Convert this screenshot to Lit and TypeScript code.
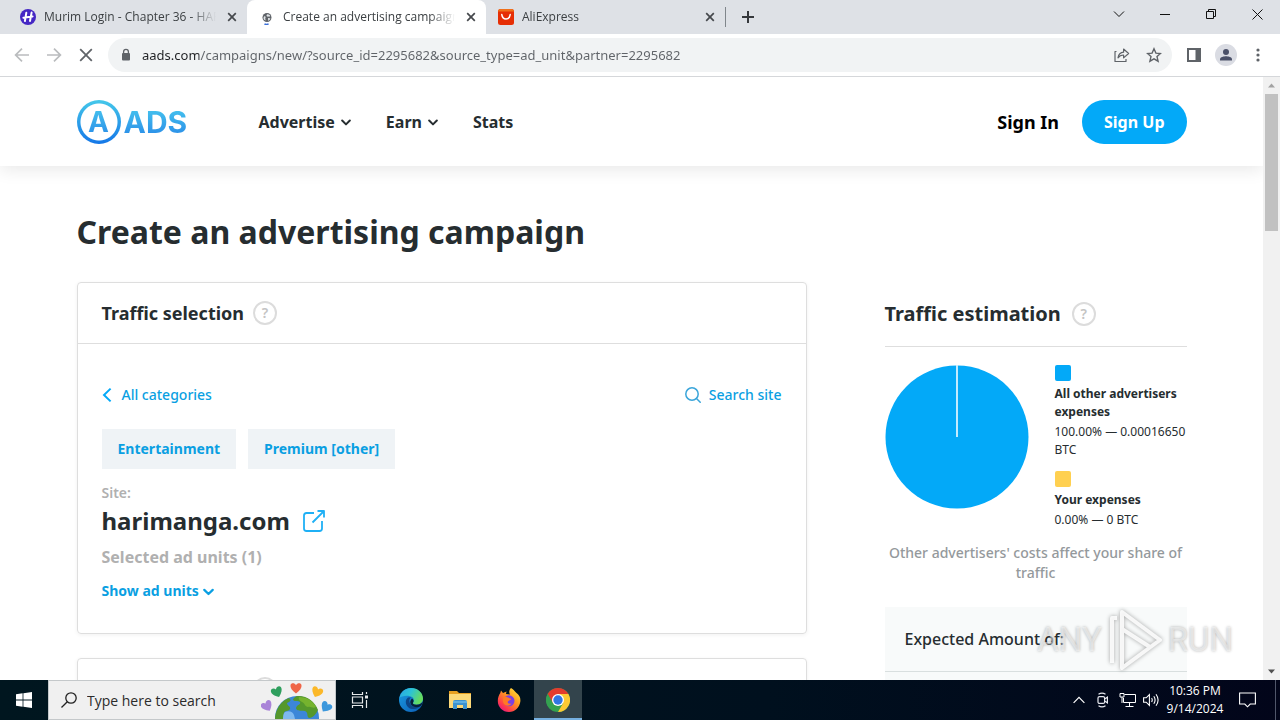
import { LitElement, html, css, svg } from "lit";
import { customElement } from "lit/decorators.js";
import { classMap } from "lit/directives/class-map.js";

const reset = css`
  *,
  *::before,
  *::after {
    box-sizing: border-box;
  }
  button,
  input {
    font: inherit;
    color: inherit;
    border: 0;
    padding: 0;
    margin: 0;
    background: none;
    outline: 0;
  }
  a {
    color: inherit;
    text-decoration: none;
  }
  h1,
  h2,
  p,
  dl,
  dd {
    margin: 0;
    padding: 0;
  }
  svg {
    display: block;
    flex: none;
  }
`;

const chevron = (size: number) => svg`
  <svg width=${size} height=${size} viewBox="0 0 12 12" fill="none" stroke="currentColor" stroke-width="2.400" stroke-linecap="round" stroke-linejoin="round"><path d="M1.400 4.200 6 8.800 10.600 4.200"/></svg>`;

const faviconH = html`<svg width="16" height="16" viewBox="0 0 16 16">
  <circle cx="8" cy="8" r="8" fill="#4527c4" />
  <path d="M6.3 3.8 4.9 12M11.6 3.6 10 12M3.4 8.7C6 8.5 9 7.6 12.6 7.4" stroke="#fff" stroke-width="2" stroke-linecap="round" fill="none" />
</svg>`;
const faviconLoading = html`<svg width="16" height="16" viewBox="0 0 16 16">
  <circle cx="8" cy="8.500" r="4.500" fill="#5f6368" />
  <path d="M5 7.400c1.600-.4 2 .8 1.400 1.600-.6.8.6 1.400 0 2.600C4.600 10.600 4 9 5 7.400zM8 5.400c1.400-.4 2.800.4 3.200 1.600-.8 1.200-2 .2-2.600.8C7.400 7 7.200 6 8 5.400zM9 9.200c1-.4 2 0 2.400.4-.4 1.200-1.200 2-2.200 2.200z" fill="#dfe3e6" />
  <path d="M5.500 15C6.500 15.500 8.500 15.500 9.600 14.900" stroke="#3b6fd8" stroke-width="1.400" fill="none" />
</svg>`;
const faviconAli = html`<svg width="16" height="16" viewBox="0 0 16 16">
  <rect width="16" height="16" rx="2.500" fill="#e62e04" />
  <path d="M0 2.500A2.500 2.500 0 0 1 2.500 0h11A2.500 2.500 0 0 1 16 2.500z" fill="#f0701a" />
  <path d="M3.800 5.600C4.600 11.400 11.400 11.400 12.200 5.600" stroke="#fff" stroke-width="1.500" stroke-linecap="round" fill="none" />
</svg>`;

const tabs = [
  { title: "Murim Login - Chapter 36 - HAR", icon: faviconH, active: false },
  { title: "Create an advertising campaign", icon: faviconLoading, active: true },
  { title: "AliExpress", icon: faviconAli, active: false },
];

@customElement("browser-chrome")
export class BrowserChrome extends LitElement {
  static styles = [
    reset,
    css`
      :host {
        display: block;
        flex: none;
        font-family: "Open Sans", "Noto Sans", sans-serif;
        font-size: 12px;
        color: #3c4043;
      }
      .strip {
        display: flex;
        height: 34px;
        padding-left: 8px;
        background: #dee1e6;
      }
      .tab {
        display: flex;
        align-items: center;
        flex: 0 1 239px;
        min-width: 0;
        padding: 0 7px 0 12px;
        gap: 8px;
      }
      .tab.active {
        background: #fff;
        border-radius: 8px 8px 0 0;
      }
      .title {
        flex: 1;
        min-width: 0;
        overflow: hidden;
        white-space: nowrap;
        line-height: 16px;
        mask-image: linear-gradient(to right, #000 85%, transparent);
      }
      .close,
      .icon {
        display: grid;
        place-items: center;
      }
      .close {
        width: 16px;
        height: 16px;
      }
      .add {
        display: grid;
        place-items: center;
        width: 46px;
        position: relative;
      }
      .add::before {
        content: "";
        position: absolute;
        left: 0;
        top: 7px;
        height: 20px;
        width: 1px;
        background: #80868b;
      }
      .window {
        display: flex;
        margin-left: auto;
        color: #111;
      }
      .window button {
        display: grid;
        place-items: center;
        width: 46px;
        height: 28px;
      }
      .toolbar {
        display: flex;
        align-items: center;
        height: 43px;
        padding: 0 6px;
        background: #fff;
        border-bottom: 1px solid #d5d7da;
      }
      .icon {
        width: 32px;
        height: 32px;
        color: #5f6368;
      }
      .dim {
        color: #babcbe;
      }
      .omnibox {
        display: flex;
        align-items: center;
        flex: 1;
        min-width: 0;
        height: 34px;
        margin: 0 6px;
        padding: 0 2px 0 12px;
        gap: 10px;
        border-radius: 17px;
        background: #f1f3f4;
      }
      .url {
        flex: 1;
        min-width: 0;
        height: 24px;
        font-family: "Noto Sans", sans-serif;
        font-size: 13px;
        color: #5f6368;
        background: linear-gradient(to right, #202124 57px, #5f6368 57px);
        background-clip: text;
        -webkit-background-clip: text;
        -webkit-text-fill-color: transparent;
      }
      .actions {
        display: flex;
      }
    `,
  ];

  render() {
    return html`
      <div class="strip">
        ${tabs.map(
          (t) => html`<div class=${classMap({ tab: true, active: t.active })}>
            ${t.icon}<span class="title">${t.title}</span>
            <button class="close" aria-label="Close tab">
              <svg width="10" height="10" viewBox="0 0 10 10" stroke="#45484c" stroke-width="1.700"><path d="M1.200 1.200l7.600 7.600M8.800 1.200 1.200 8.800" /></svg>
            </button>
          </div>`
        )}
        <button class="add" aria-label="New tab">
          <svg width="14" height="14" viewBox="0 0 14 14" stroke="#35383c" stroke-width="2"><path d="M7 1v12M1 7h12" /></svg>
        </button>
        <div class="window">
          <button aria-label="Search tabs"><svg width="12" height="12" viewBox="0 0 12 12" fill="none" stroke="currentColor"><path d="M1 3.500 6 8.500 11 3.500" /></svg></button>
          <button aria-label="Minimize"><svg width="10" height="11" viewBox="0 0 10 11" stroke="currentColor"><path d="M0 5.500h10" /></svg></button>
          <button aria-label="Restore"><svg width="10" height="10" viewBox="0 0 10 10" fill="none" stroke="currentColor"><path d="M.5 2.500h7v7h-7zM2.500 2.500v-2h7v7h-2" /></svg></button>
          <button aria-label="Close"><svg width="11" height="11" viewBox="0 0 11 11" stroke="currentColor"><path d="M.5.5l10 10M10.500.5l-10 10" /></svg></button>
        </div>
      </div>
      <div class="toolbar">
        <button class="icon dim" aria-label="Back"><svg width="16" height="16" viewBox="0 0 16 16" fill="none" stroke="currentColor" stroke-width="1.700"><path d="M15 8H2M8 1.600 1.600 8 8 14.400" /></svg></button>
        <button class="icon dim" aria-label="Forward"><svg width="16" height="16" viewBox="0 0 16 16" fill="none" stroke="currentColor" stroke-width="1.700"><path d="M1 8h13M8 1.600 14.400 8 8 14.400" /></svg></button>
        <button class="icon" aria-label="Stop"><svg width="14" height="14" viewBox="0 0 14 14" stroke="currentColor" stroke-width="1.800"><path d="M1.200 1.200l11.600 11.600M12.800 1.200 1.200 12.800" /></svg></button>
        <div class="omnibox">
          <svg width="12" height="14" viewBox="0 0 12 14"><rect x="2" y="5" width="8" height="7.500" rx="1" fill="#5f6368" /><path d="M3.600 5.500V3.800a2.400 2.400 0 0 1 4.800 0v1.700" fill="none" stroke="#5f6368" stroke-width="1.300" /></svg>
          <input class="url" aria-label="Address" .value=${"aads.com/campaigns/new/?source_id=2295682&source_type=ad_unit&partner=2295682"} />
          <div class="actions">
            <button class="icon" aria-label="Share"><svg width="16" height="16" viewBox="0 0 16 16" fill="none" stroke="currentColor" stroke-width="1.200" stroke-linejoin="round"><path d="M2.500 4.500H1v10h11v-2.500M4 10.800C4.600 7.200 6.600 5.400 9.600 5.200V2l5 4.500-5 4.400V8C7 8 5.400 8.800 4 10.800z" /></svg></button>
            <button class="icon" aria-label="Bookmark"><svg width="16" height="16" viewBox="0 0 16 16" fill="none" stroke="currentColor" stroke-width="1.400"><path d="M8 1.800l1.900 4.300 4.600.4-3.500 3.100 1.100 4.600L8 11.800l-4.100 2.400L5 9.600 1.500 6.500l4.600-.4z" /></svg></button>
          </div>
        </div>
        <button class="icon" aria-label="Side panel"><svg width="14" height="14" viewBox="0 0 14 14"><path d="M0 0h14v14H0zM2 2v10h6.500V2z" fill="currentColor" fill-rule="evenodd" /></svg></button>
        <button class="icon" aria-label="Profile"><svg width="22" height="22" viewBox="0 0 22 22"><circle cx="11" cy="11" r="11" fill="#dadce3" /><circle cx="11" cy="8" r="3" fill="#4a5068" /><path d="M5 16.500v-1.300C5 13 9 12.200 11 12.200s6 .8 6 3v1.300z" fill="#4a5068" /></svg></button>
        <button class="icon" aria-label="Menu"><svg width="4" height="14" viewBox="0 0 4 14" fill="currentColor"><circle cx="2" cy="2" r="1.600" /><circle cx="2" cy="7" r="1.600" /><circle cx="2" cy="12" r="1.600" /></svg></button>
      </div>
    `;
  }
}

@customElement("help-tip")
export class HelpTip extends LitElement {
  static styles = [
    reset,
    css`
      :host {
        display: block;
      }
      .help {
        display: grid;
        place-items: center;
        width: 24px;
        height: 24px;
        border: 2px solid #dcdcdc;
        border-radius: 50%;
        color: #c4c4c4;
        font: 600 14px/20px "Noto Sans", sans-serif;
      }
    `,
  ];
  render() {
    return html`<button class="help" aria-label="Help">?</button>`;
  }
}

const legend = [
  { name: "All other advertisers expenses", value: "100.00% — 0.00016650 BTC", tone: "blue" },
  { name: "Your expenses", value: "0.00% — 0 BTC", tone: "yellow" },
];

@customElement("campaign-page")
export class CampaignPage extends LitElement {
  static styles = [
    reset,
    css`
      :host {
        display: flex;
        flex: 1;
        min-height: 0;
        overflow: hidden;
        background: #fff;
        font-family: "Noto Sans", sans-serif;
        font-size: 14px;
        line-height: 20px;
        color: #262d30;
      }
      .content {
        flex: 1;
        min-width: 0;
        overflow: hidden;
      }
      .container {
        width: 100%;
        max-width: 1140px;
        margin: 0 auto;
        padding: 0 15px;
      }
      .header {
        box-shadow: 0 4px 16px rgba(0, 0, 0, 0.09);
      }
      .bar {
        display: flex;
        align-items: center;
        height: 89px;
        font-size: 16px;
        font-weight: 700;
        line-height: 24px;
      }
      .logo {
        display: flex;
        align-items: center;
        gap: 3px;
        width: 182px;
        font: 700 30px/44px "Inter", sans-serif;
      }
      .mark {
        display: grid;
        place-items: center;
        width: 44px;
        height: 44px;
        border-radius: 50%;
        font-size: 28px;
        background: radial-gradient(circle, #fff 18px, transparent 19px), linear-gradient(#45c8ea, #1477e8);
      }
      .word {
        background: linear-gradient(#45c2ee 20%, #2b8fe8 80%);
        background-clip: text;
        -webkit-background-clip: text;
        color: transparent;
      }
      .nav {
        display: flex;
        gap: 35px;
      }
      .nav a {
        display: flex;
        align-items: center;
        gap: 6px;
      }
      .account {
        display: flex;
        align-items: center;
        gap: 23px;
        margin-left: auto;
      }
      .signin {
        color: #000;
        font-size: 18px;
      }
      .signup {
        height: 44px;
        padding: 0 22px;
        border-radius: 22px;
        color: #fff;
        background: #03a9f8;
      }
      .heading {
        margin: 42px 0 26px;
        font-size: 32px;
        line-height: 48px;
        font-weight: 700;
      }
      .columns {
        display: grid;
        grid-template-columns: minmax(0, 730fr) minmax(0, 302fr);
        column-gap: 78px;
      }
      .cards {
        display: grid;
        gap: 24px;
        align-content: start;
      }
      .card {
        border: 1px solid #dedede;
        border-radius: 4px;
        box-shadow: 0 1px 4px rgba(0, 0, 0, 0.06);
      }
      .cardhead {
        display: flex;
        align-items: center;
        gap: 9px;
        height: 61px;
        padding: 0 24px;
        border-bottom: 1px solid #dedede;
      }
      .cardhead h2 {
        min-width: 142px;
        font-size: 18px;
        line-height: 24px;
        font-weight: 700;
      }
      .cardbody {
        padding: 40px 24px 32px;
      }
      .link {
        display: flex;
        align-items: center;
        gap: 8px;
        color: #0a9fe2;
        font-weight: 500;
      }
      .between {
        display: flex;
        justify-content: space-between;
        height: 22px;
      }
      .strong {
        gap: 4px;
        font-weight: 700;
      }
      .tags {
        display: flex;
        gap: 12px;
        margin: 23px 0 14px;
      }
      .tags a {
        padding: 10px 16px;
        background: #eff3f6;
        color: #0a9fe2;
        font-weight: 700;
      }
      .muted {
        color: #b0b0b0;
        font-weight: 700;
      }
      .light {
        font-weight: 600;
      }
      .site {
        display: flex;
        align-items: center;
        gap: 12px;
        margin: 2px 0 8px;
        font-size: 24px;
        line-height: 32px;
        font-weight: 700;
        color: #262d30;
      }
      .units {
        margin-bottom: 12px;
        font-size: 16px;
        line-height: 24px;
      }
      .aside {
        display: flex;
        flex-direction: column;
      }
      .estimate {
        display: flex;
        align-items: center;
        gap: 11px;
        height: 65px;
        border-bottom: 1px solid #dedede;
        white-space: nowrap;
      }
      .estimate h2 {
        font-size: 20px;
        font-weight: 700;
      }
      .chart {
        display: flex;
        gap: 26px;
        padding: 18px 0 14px;
        font-size: 12px;
        line-height: 18px;
      }
      .legend {
        display: grid;
        gap: 12px;
        flex: 1;
        margin-right: -2px;
      }
      .legend dt {
        font-weight: 700;
      }
      .legend dt::before {
        content: "";
        display: block;
        width: 16px;
        height: 16px;
        margin-bottom: 4px;
        border-radius: 2px;
        background: #03a9f8;
      }
      .legend .yellow::before {
        background: #ffd050;
      }
      .legend dd {
        margin-top: 2px;
      }
      .note {
        text-align: center;
        color: #94999c;
        font-weight: 500;
      }
      .expected {
        margin-top: 24px;
        background: #f8fafa;
        font-size: 16px;
        line-height: 24px;
        font-weight: 500;
      }
      .expected p {
        height: 65px;
        padding: 20px;
        border-bottom: 1px solid #d9dfdf;
      }
      .rest {
        height: 60px;
      }
      .scroll {
        display: flex;
        flex-direction: column;
        align-items: center;
        flex: none;
        width: 17px;
        background: #f1f1f1;
      }
      .scroll svg {
        margin: 6px 0;
      }
      .track {
        flex: 1;
        width: 13px;
      }
      .thumb {
        height: 24%;
        background: #c1c1c1;
      }
    `,
  ];

  render() {
    return html`
      <div class="content">
        <header class="header">
          <div class="container bar">
            <a class="logo" href="#"><span class="mark"><span class="word">A</span></span><span class="word">ADS</span></a>
            <nav class="nav">
              <a href="#">Advertise ${chevron(10)}</a>
              <a href="#">Earn ${chevron(10)}</a>
              <a href="#">Stats</a>
            </nav>
            <div class="account">
              <a class="signin" href="#">Sign In</a>
              <button class="signup">Sign Up</button>
            </div>
          </div>
        </header>
        <main class="container">
          <h1 class="heading">Create an advertising campaign</h1>
          <div class="columns">
            <div class="cards">
              <section class="card">
                <div class="cardhead"><h2>Traffic selection</h2><help-tip></help-tip></div>
                <div class="cardbody">
                  <div class="between">
                    <a class="link" href="#">
                      <svg width="12" height="16" viewBox="0 0 12 16" fill="none" stroke="#03a9f8" stroke-width="2"><path d="M8.600 1.600 2 8l6.600 6.400" /></svg>All categories
                    </a>
                    <a class="link" href="#">
                      <svg width="16" height="16" viewBox="0 0 16 16" fill="none" stroke="#3aa5da" stroke-width="1.500"><circle cx="7" cy="7" r="6.200" /><path d="M11.500 11.500l4.200 4.200" /></svg>Search site
                    </a>
                  </div>
                  <div class="tags"><a href="#">Entertainment</a><a href="#">Premium [other]</a></div>
                  <p class="muted light">Site:</p>
                  <p class="site">harimanga.com
                    <a href="#" aria-label="Open site"><svg width="24" height="24" viewBox="0 0 24 24" fill="none" stroke="#1fb0f5" stroke-width="1.800" stroke-linejoin="round"><path d="M12 4H4.500Q2 4 2 6.500v13Q2 22 4.500 22h13q2.500 0 2.500-2.500V12M15.500 2H22v6.500M22 2 10.500 13.500" /></svg></a>
                  </p>
                  <p class="muted units">Selected ad units (1)</p>
                  <a class="link strong" href="#">Show ad units ${chevron(11)}</a>
                </div>
              </section>
              <section class="card">
                <div class="cardhead"><h2></h2><help-tip></help-tip></div>
              </section>
            </div>
            <aside class="aside">
              <div class="estimate"><h2>Traffic estimation</h2><help-tip></help-tip></div>
              <div class="chart">
                <svg width="144" height="144" viewBox="0 0 144 144"><circle cx="72" cy="72" r="71.500" fill="#03a9f8" /><path d="M72 0v72" stroke="#d9f2fe" stroke-width="1.800" /></svg>
                <dl class="legend">
                  ${legend.map((l) => html`<div><dt class=${l.tone}>${l.name}</dt><dd>${l.value}</dd></div>`)}
                </dl>
              </div>
              <p class="note">Other advertisers' costs affect your share of traffic</p>
              <div class="expected"><p>Expected Amount of:</p><div class="rest"></div></div>
            </aside>
          </div>
        </main>
      </div>
      <div class="scroll">
        <svg width="7" height="5" viewBox="0 0 7 5"><path d="M0 4.500h7L3.500.5z" fill="#a3a3a3" /></svg>
        <div class="track"><div class="thumb"></div></div>
        <svg width="7" height="5" viewBox="0 0 7 5"><path d="M0 .5h7L3.500 4.500z" fill="#505050" /></svg>
      </div>
    `;
  }
}

const heart = (x: number, y: number, r: number, color: string) => svg`
  <path transform="translate(${x} ${y}) rotate(${r})" fill=${color} d="M0 5.500C-4 2.500-6-.5-5.500-2.800-5-5.200-1.500-5.500 0-2.800 1.500-5.500 5-5.200 5.500-2.800 6-.5 4 2.500 0 5.500z"/>`;

const apps = [
  {
    name: "Task View",
    active: false,
    icon: html`<svg width="22" height="16" viewBox="0 0 22 16" fill="none" stroke="#e4e8ea" stroke-width="1.200"><path d="M1.500 0v2.500h10V0M1.500 16v-2.500h10V16M1.500 5h10v6h-10zM15.500 0v2M15.500 8v8" /><path d="M14 5h3" stroke-width="3" /></svg>`,
  },
  {
    name: "Edge",
    active: false,
    icon: html`<svg width="24" height="24" viewBox="0 0 24 24">
      <defs><linearGradient id="edgeTop" x1="0" y1="0" x2="1" y2=".4"><stop stop-color="#2aa4e6" /><stop offset=".5" stop-color="#2cc3d6" /><stop offset="1" stop-color="#66dc5e" /></linearGradient>
      <linearGradient id="edgeLow" x1="0" y1="0" x2="1" y2="1"><stop stop-color="#1b9de2" /><stop offset="1" stop-color="#0b5cb5" /></linearGradient></defs>
      <circle cx="12" cy="12" r="12" fill="url(#edgeLow)" />
      <path d="M.4 10C2 3.500 6.500 0 12 0c7 0 12 5 12 10.500 0 4-3 6.200-6.500 6.200-3 0-4.200-1.200-3.400-2.200 1.600-2 .8-5.500-3-6.300C6.500 7.200 1.500 8.500.4 10z" fill="url(#edgeTop)" />
      <path d="M9 9.500c-3 2-3 7 .5 10 2.500 2 7 2.500 11.800-.8-3 1.200-8 .5-10-2.700C9.800 13.500 10 11 12 9.300z" fill="#0d4586" />
      <path d="M14.100 14.500c-.8 1 .4 2.200 3.400 2.200 3.500 0 5.300-1.200 6.200-3.200 0 2-1 3.900-2.600 5-3 1.300-7.500.7-9.400-2.300-.9-2-.4-4 1.300-5.600 1.700 1.200 2.100 2.700 1.100 3.900z" fill="#07203a" /></svg>`,
  },
  {
    name: "File Explorer",
    active: false,
    icon: html`<svg width="22" height="20" viewBox="0 0 22 20"><path d="M0 1h8l2 2h12v4H0z" fill="#e8a020" /><path d="M0 4h22v14H0z" fill="#fdd978" /><path d="M4 19v-7q0-2 2-2h10q2 0 2 2v7h-4v-4H8v4z" fill="#3d93cf" /><path d="M4 12h14" stroke="#6ab8e8" stroke-width="1.500" /></svg>`,
  },
  {
    name: "Firefox",
    active: false,
    icon: html`<svg width="24" height="24" viewBox="0 0 24 24">
      <defs><linearGradient id="fox" x1="1" y1="0" x2=".2" y2="1"><stop stop-color="#fff044" /><stop offset=".45" stop-color="#ff9a1f" /><stop offset=".8" stop-color="#ff3d4a" /><stop offset="1" stop-color="#e31587" /></linearGradient></defs>
      <path d="M14 0c3 1.500 3.500 3.500 5.500 5 3 2.200 4.300 5 3.800 8.800C22.500 19.500 18 24 12 24 5.500 24 .8 19 .8 13 .8 9.500 2 7 3.300 5L4 2.500 6 5l3.500-1.500L9 6l4 .5C11.500 4 12.500 1.500 14 0z" fill="url(#fox)" />
      <circle cx="12" cy="12.800" r="5.500" fill="#7b3fe4" /><path d="M6 9.500c2-1.500 4.500-.5 6 .5l2.500 1c-1 1.500-3 1.200-3.500 2.500-1 1 .8 3 3.500 2 -2 3.500-7.500 2.500-8.500-1.500z" fill="#ff7a25" /></svg>`,
  },
  {
    name: "Chrome",
    active: true,
    icon: html`<svg width="24" height="24" viewBox="0 0 24 24"><circle cx="12" cy="12" r="12" fill="#34a150" /><path d="M12 12 1.600 6A12 12 0 0 1 22.400 6z" fill="#e33b2e" /><path d="M12 6h10.400A12 12 0 0 1 12 24l5.200-9z" fill="#fcc934" /><path d="M1.600 6 6.800 15 12 12V6z" fill="#e33b2e" /><path d="M1.600 6 6.800 15l3 1-2 7A12 12 0 0 1 1.600 6z" fill="#34a150" /><circle cx="12" cy="12" r="6" fill="#fff" /><circle cx="12" cy="12" r="4.700" fill="#2f76e4" /></svg>`,
  },
];

@customElement("task-bar")
export class TaskBar extends LitElement {
  static styles = [
    reset,
    css`
      :host {
        display: flex;
        flex: none;
        height: 40px;
        background: linear-gradient(to right, #00161f, #00101e 60%, #02051a);
        font-family: "Open Sans", "Noto Sans", sans-serif;
        color: #fff;
      }
      .cell {
        display: grid;
        place-items: center;
        width: 48px;
        height: 40px;
      }
      .apps {
        display: flex;
        gap: 1px;
        margin-left: 2px;
      }
      .app {
        border-bottom: 2px solid transparent;
        padding-top: 2px;
      }
      .app.active {
        background: #33444c;
        border-bottom-color: #76b0e0;
      }
      .search {
        display: flex;
        align-items: center;
        flex: 0 1 288px;
        min-width: 0;
        gap: 10px;
        padding-left: 12px;
        background: #f0f0f0;
        border: 1px solid #c4c8ca;
        color: #222;
      }
      .field {
        flex: 1;
        min-width: 0;
        height: 30px;
        font-size: 14px;
      }
      .field::placeholder {
        color: #2b2b2b;
        opacity: 1;
      }
      .tray {
        display: flex;
        align-items: center;
        margin-left: auto;
      }
      .mini {
        display: grid;
        place-items: center;
        width: 24px;
        height: 40px;
      }
      .clock {
        width: 64px;
        margin-right: 6px;
        font-size: 12px;
        line-height: 18px;
        text-align: center;
        white-space: nowrap;
      }
      .notes {
        width: 28px;
      }
      .peek {
        width: 5px;
        height: 40px;
        margin-left: 14px;
        border-left: 1px solid #50566a;
      }
    `,
  ];

  render() {
    return html`
      <button class="cell" aria-label="Start"><svg width="16" height="16" viewBox="0 0 16 16" fill="#fff"><path d="M0 2.200 6.600 1.300v6.300H0zM7.400 1.200 16 0v7.600H7.400zM0 8.400h6.600v6.300L0 13.800zM7.400 8.400H16V16l-8.600-1.200z" /></svg></button>
      <label class="search">
        <svg width="16" height="16" viewBox="0 0 16 16" fill="none" stroke="#222" stroke-width="1.300"><circle cx="10" cy="6" r="5.200" /><path d="M6.300 9.700.5 15.500" /></svg>
        <input class="field" aria-label="Search" placeholder="Type here to search" />
        <svg width="74" height="38" viewBox="0 0 74 38">
          <circle cx="36" cy="37" r="22" fill="#3c86d8" />
          <path d="M36 15c9-1 18 5 21 14-2 4-5 8-9 8-3-2 0-5-4-7-4-1-8 1-9-3 1-4 5-3 4-6-2-2-5 0-7-2 0-2 2-3 4-4zM16 29c3-7 7-10 12-12 3 2 1 4-2 5 0 3 4 3 3 6-2 3-5 1-6 4-1 2 2 3 1 5l0 1H14c0-3 1-7 2-9z" fill="#55982c" />
          <path d="M38 16c8 0 14 4 17 10-3 2-5-1-8 0-3 0-3-4-6-5-2-1-4-3-3-5z" fill="#76b32e" />
          <path d="M24 31c4-2 8 0 9 3l1 4H22c0-3 0-5 2-7z" fill="#7fb9f0" />
          ${heart(35, 7, 0, "#ef6548")}${heart(16, 11, -22, "#2f9f5e")}${heart(56, 11, 22, "#fbb829")}${heart(6, 25, -30, "#a983d8")}${heart(65, 26, 35, "#3b97dc")}
        </svg>
      </label>
      <div class="apps">
        ${apps.map((a) => html`<button class=${classMap({ cell: true, app: true, active: a.active })} aria-label=${a.name}>${a.icon}</button>`)}
      </div>
      <div class="tray">
        <button class="mini" aria-label="Hidden icons"><svg width="12" height="8" viewBox="0 0 12 8" fill="none" stroke="#fff" stroke-width="1.200"><path d="M.6 6.800 6 1.400l5.400 5.400" /></svg></button>
        <button class="mini" aria-label="Meet now"><svg width="14" height="16" viewBox="0 0 14 16" fill="none" stroke="#e6e8ee" stroke-width="1.200"><rect x="2" y="4.600" width="6.600" height="6.800" rx="1.500" /><path d="M8.600 7 11.400 5.200v5.600L8.600 9M2.500 2.200Q6 0 9.500 2.200M2.500 13.800q3.500 2.200 7 0" /></svg></button>
        <button class="mini" aria-label="Network"><svg width="17" height="14" viewBox="0 0 17 14" fill="none" stroke="#fff"><path d="M5.500 1.500h11v8H4.500V5M10.500 9.500v4M6.500 13.500h8M1 .5h4v3.500H1zM3 4v6" /></svg></button>
        <button class="mini" aria-label="Volume"><svg width="17" height="14" viewBox="0 0 17 14" fill="none" stroke="#fff" stroke-width="1.100"><path d="M.6 4.800h2.600L6.400 1.600v10.800L3.200 9.200H.6zM8.600 5q1.300 2 0 4M10.800 3.200q2.600 3.800 0 7.600M13 1.200q4.200 5.800 0 11.600" /></svg></button>
        <div class="clock"><div>10:36 PM</div><div>9/14/2024</div></div>
        <button class="mini notes" aria-label="Notifications"><svg width="17" height="16" viewBox="0 0 17 16" fill="none" stroke="#fff" stroke-width="1.100"><path d="M.6 1h15.800v11h-5.200l-2.700 2.800L5.800 12H.6z" /></svg></button>
        <div class="peek"></div>
      </div>
    `;
  }
}

@customElement("app-root")
export class AppRoot extends LitElement {
  static styles = [
    reset,
    css`
      :host {
        position: relative;
        display: flex;
        flex-direction: column;
        height: 100vh;
        overflow: hidden;
      }
      .watermark {
        position: absolute;
        right: 47px;
        bottom: 48px;
        display: flex;
        align-items: center;
        gap: 6px;
        font: 33px/64px "Roboto", sans-serif;
        color: rgba(255, 255, 255, 0.5);
        text-shadow: 0 0 3px rgba(0, 0, 0, 0.3);
        pointer-events: none;
      }
      .play {
        filter: drop-shadow(0 0 2px rgba(0, 0, 0, 0.4));
      }
    `,
  ];

  render() {
    return html`
      <browser-chrome></browser-chrome>
      <campaign-page></campaign-page>
      <task-bar></task-bar>
      <div class="watermark">
        <span>ANY</span>
        <svg class="play" width="54" height="62" viewBox="0 0 54 62" fill="none" stroke="#fff" stroke-opacity=".85" stroke-width="4" stroke-linejoin="round"><path d="M14 3 52 31 14 59zM14 20 42 38M14 44V20" /><path d="M4 54V9h5" /></svg>
        <span>RUN</span>
      </div>
    `;
  }
}
